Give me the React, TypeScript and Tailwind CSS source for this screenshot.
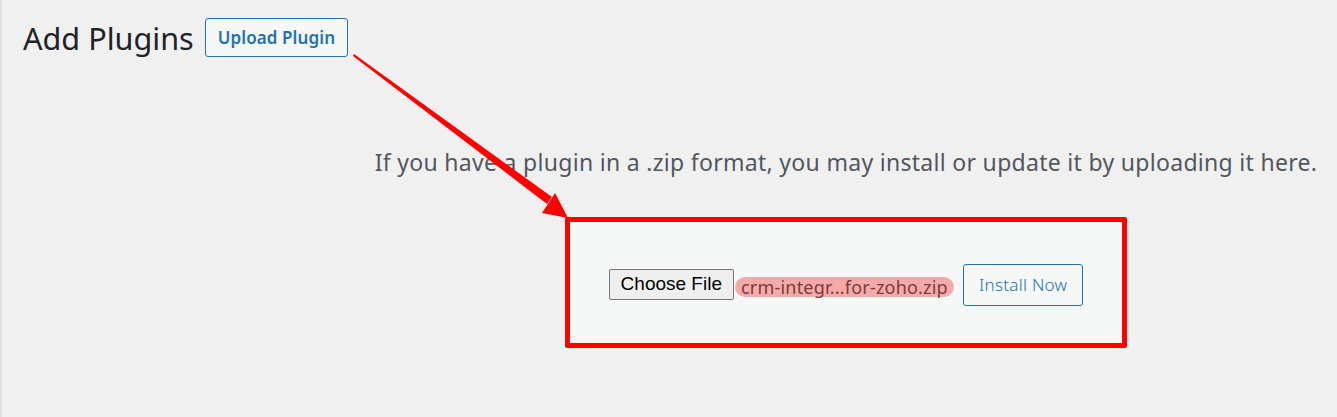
import React from "react";

export default function App() {
  return (
    <div
      className="relative w-[1337px] h-[417px] bg-[#f0f0f1] border-l-2 border-[#e2e2e4] overflow-hidden"
      style={{ fontFamily: '"Noto Sans", "Open Sans", sans-serif' }}
    >
      <div className="flex items-center gap-[11px] pl-[21px] pt-[18px]">
        <h1 className="text-[30.6px] leading-[38px] text-[#1d2327] font-normal">Add Plugins</h1>
        <button className="h-[39px] px-[12px] rounded-[3px] border border-[#2271b1] bg-[#f6f7f7] text-[#2271b1] text-[17px] font-semibold tracking-[0.1px]">
          Upload Plugin
        </button>
      </div>

      <div className="ml-[353px] flex flex-col items-center">
        <p className="mt-[89px] text-[23px] leading-[32px] tracking-[0.3px] text-[#50575e]">
          If you have a plugin in a .zip format, you may install or update it by uploading it here.
        </p>
        <div className="mt-[39px] w-[562px] h-[131px] pt-[4px] border-[5px] border-[#ff0000] rounded-[2px] bg-[#f6f7f7] flex items-center justify-center">
          <div className="flex items-center">
            <button
              className="h-[31px] px-[11px] bg-[#efefef] border border-[#767676] rounded-[2px] text-[19px] text-black"
              style={{ fontFamily: '"Liberation Sans", Arial, sans-serif' }}
            >
              Choose File
            </button>
            <span className="ml-[1px] mt-[4px] h-[20px] px-[6px] rounded-full bg-[#f5aaaa] text-[#7d3a3a] text-[18px] leading-[20px] tracking-[0.2px]">
              crm-integr...for-zoho.zip
            </span>
            <button className="ml-[9px] h-[42px] px-[15px] rounded-[3px] border border-[#2271b1] bg-[#f6f7f7] text-[#2271b1] text-[17px] font-light tracking-[0.3px]">
              Install Now
            </button>
          </div>
        </div>
      </div>

      <svg className="absolute left-0 top-0 pointer-events-none" width="1337" height="417">
        <polygon points="351,56 352,54 550,197 545,204" fill="#ff0000" />
        <polygon points="566,218 540,213 553,193" fill="#ff0000" />
      </svg>
    </div>
  );
}
